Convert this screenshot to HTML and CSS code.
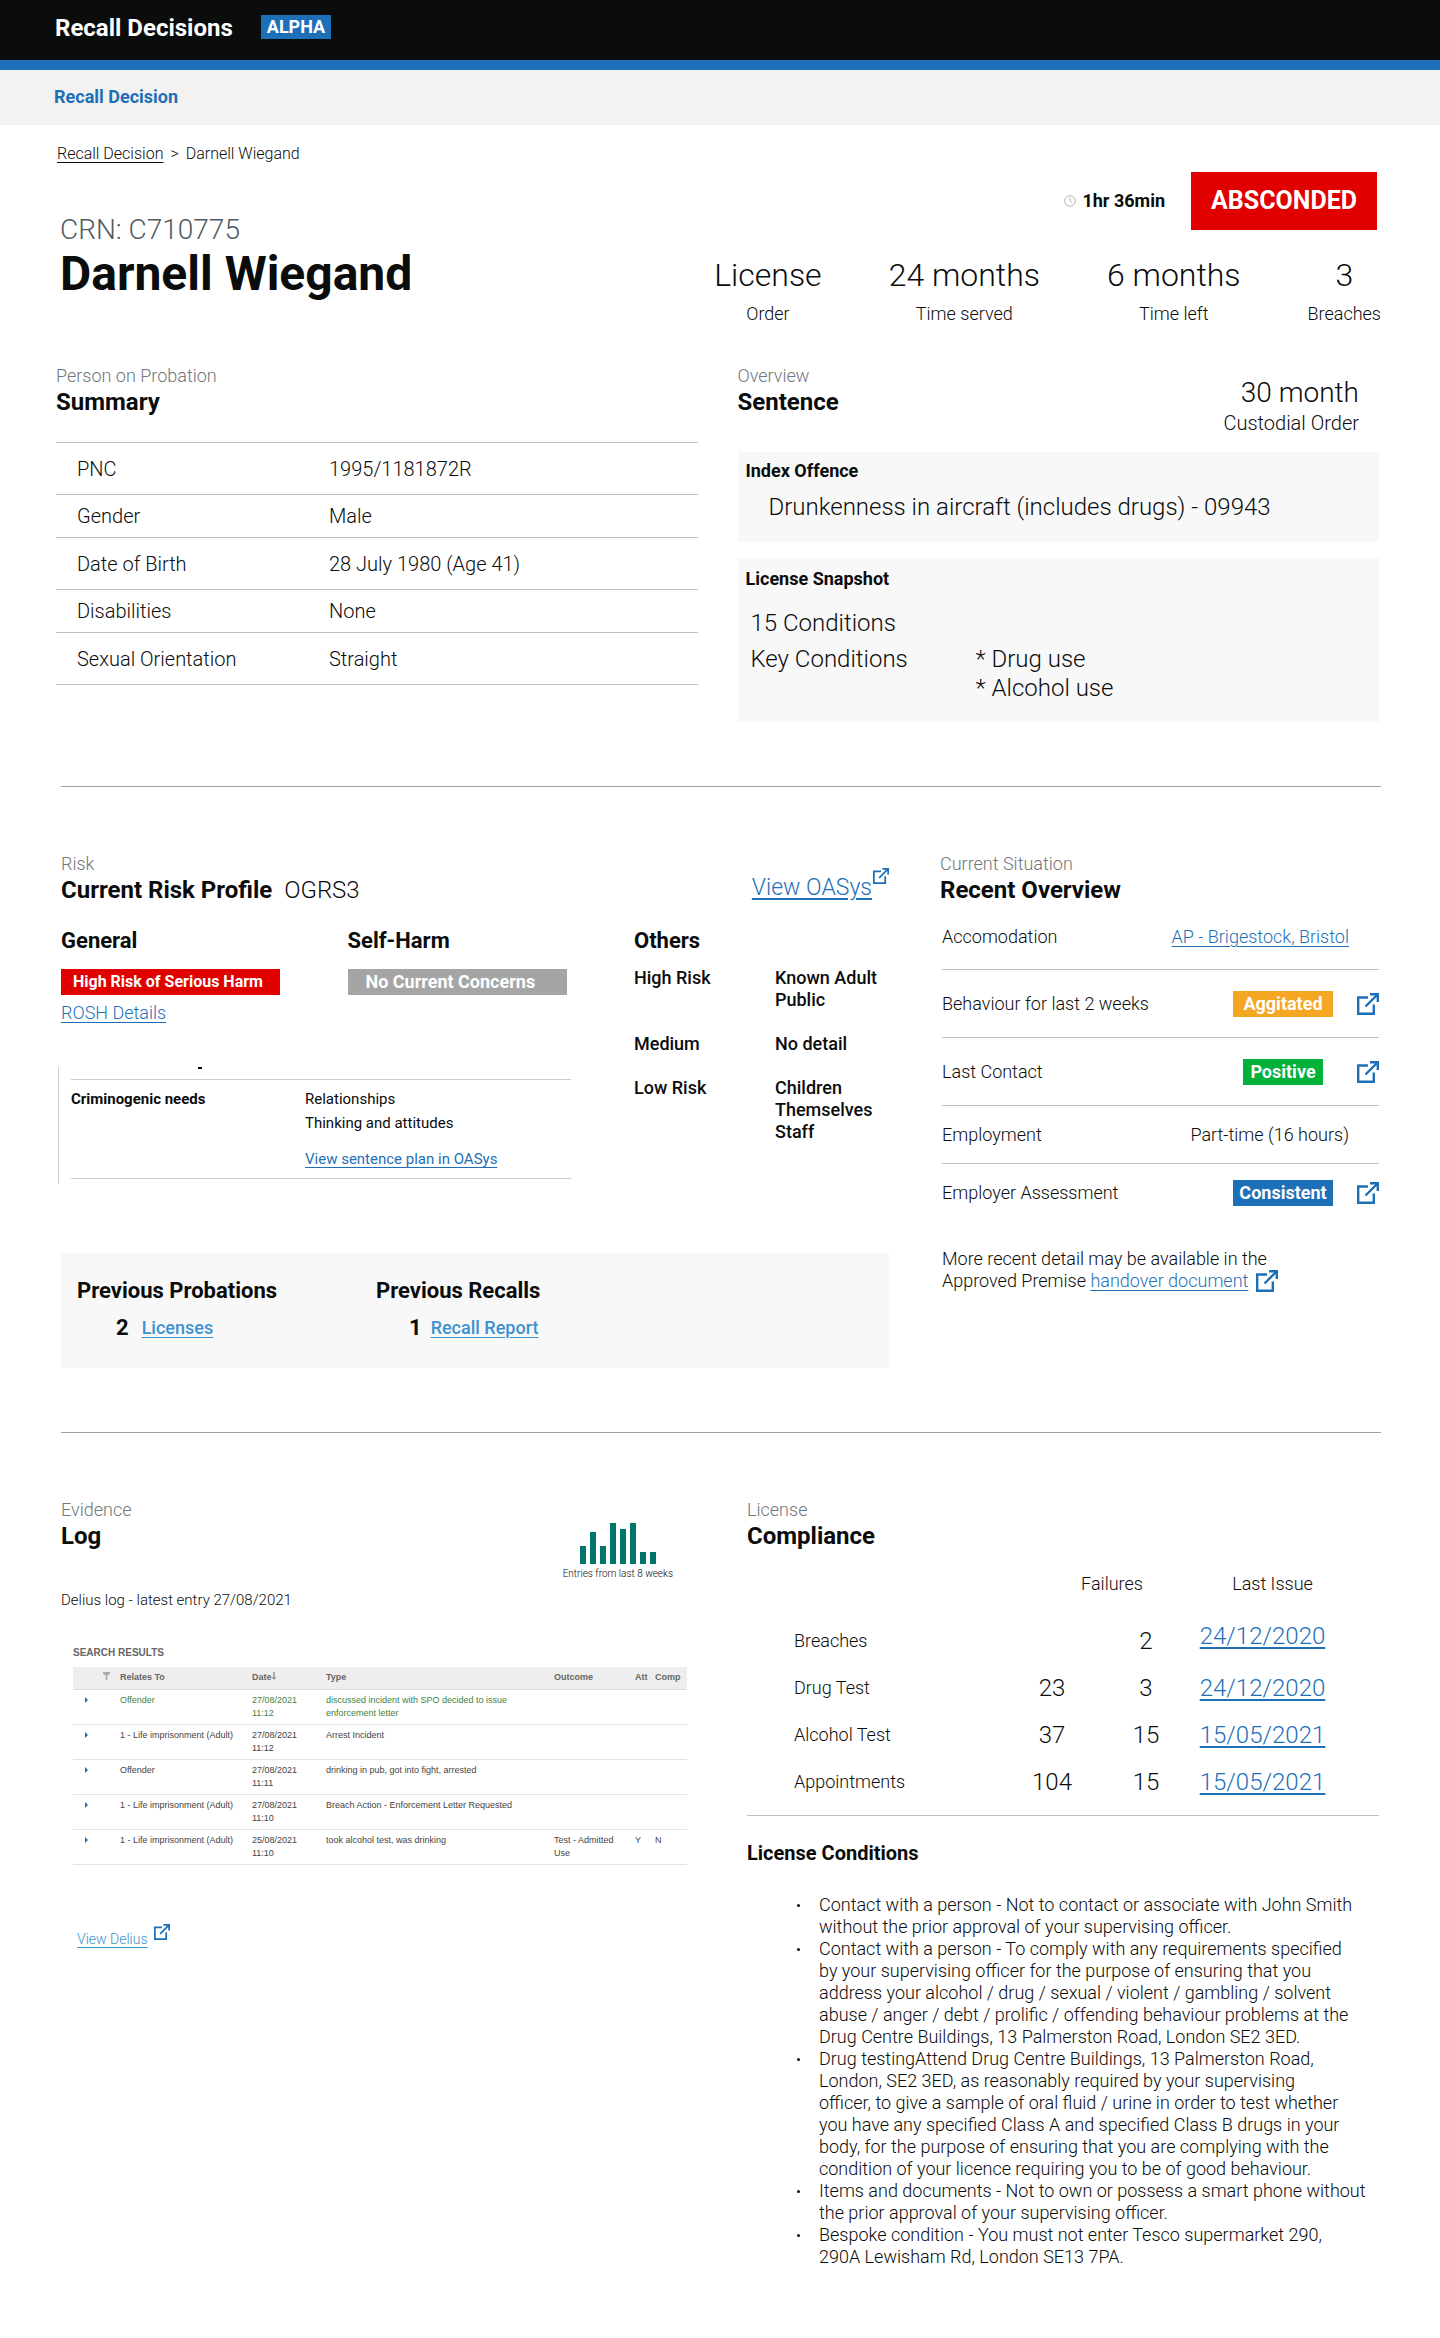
FILE: index.html
```html
<!DOCTYPE html>
<html lang="en">
<head>
<meta charset="utf-8">
<meta name="viewport" content="width=device-width, initial-scale=1">
<title>Recall Decisions</title>
<link rel="stylesheet" href="styles.css">
</head>
<body>
<svg class="sprite" aria-hidden="true">
  <symbol id="external" viewBox="0 0 22 22">
    <path d="M11 4.5H1.2V20.8H16.8V11.5M8.5 13.5L20 2M13 1.2H20.8V9" fill="none" stroke="#1d70b8" stroke-width="2.4"/>
  </symbol>
</svg>

<header class="topbar">
  <span class="topbar-title">Recall Decisions</span>
  <strong class="phase">ALPHA</strong>
</header>
<nav class="subnav" aria-label="Primary"><a href="#">Recall Decision</a></nav>
<nav class="breadcrumb" aria-label="Breadcrumb"><a href="#">Recall Decision</a><span>&gt;</span><span>Darnell Wiegand</span></nav>

<main>
  <section class="hero">
    <div class="person">
      <p class="crn">CRN: C710775</p>
      <h1>Darnell Wiegand</h1>
    </div>
    <div class="status">
      <div class="status-row">
        <p class="timer">
          <svg width="12" height="12" viewBox="0 0 12 12" aria-hidden="true"><circle cx="6" cy="6" r="5.3" fill="none" stroke="#b1b4b6"/><path d="M6 2.5V6L8.5 7.5" fill="none" stroke="#b1b4b6"/></svg>
          1hr 36min
        </p>
        <strong class="absconded">ABSCONDED</strong>
      </div>
      <ul class="stats">
        <li><b>License</b>Order</li>
        <li><b>24 months</b>Time served</li>
        <li><b>6 months</b>Time left</li>
        <li><b>3</b>Breaches</li>
      </ul>
    </div>
  </section>

  <div class="overview">
    <section>
      <p class="eyebrow">Person on Probation</p>
      <h2>Summary</h2>
      <table class="summary">
        <tr class="tall"><th scope="row">PNC</th><td>1995/1181872R</td></tr>
        <tr><th scope="row">Gender</th><td>Male</td></tr>
        <tr class="tall"><th scope="row">Date of Birth</th><td>28 July 1980 (Age 41)</td></tr>
        <tr><th scope="row">Disabilities</th><td>None</td></tr>
        <tr class="tall"><th scope="row">Sexual Orientation</th><td>Straight</td></tr>
      </table>
    </section>
    <section>
      <div class="section-head sentence-head">
        <div>
          <p class="eyebrow">Overview</p>
          <h2>Sentence</h2>
        </div>
        <p class="order"><b>30 month</b>Custodial Order</p>
      </div>
      <div class="panel offence">
        <h3>Index Offence</h3>
        <p>Drunkenness in aircraft (includes drugs) - 09943</p>
      </div>
      <div class="panel snapshot">
        <h3>License Snapshot</h3>
        <p>15 Conditions</p>
        <div class="key">
          <p>Key Conditions</p>
          <ul><li>* Drug use</li><li>* Alcohol use</li></ul>
        </div>
      </div>
    </section>
  </div>

  <hr>

  <div class="risk-row">
    <section>
      <div class="section-head">
        <div>
          <p class="eyebrow">Risk</p>
          <h2>Current Risk Profile <span class="score">OGRS3</span></h2>
        </div>
        <p class="oasys"><a href="#">View OASys</a><svg class="icon-small"><use href="#external"/></svg></p>
      </div>
      <div class="risk">
        <div class="risk-main">
          <div class="risk-levels">
            <div>
              <h3>General</h3>
              <strong class="level level-high">High Risk of Serious Harm</strong>
              <a class="rosh" href="#">ROSH Details</a>
            </div>
            <div>
              <h3>Self-Harm</h3>
              <strong class="level level-none">No Current Concerns</strong>
            </div>
          </div>
          <div class="needs">
            <span class="needs-mark"></span>
            <div class="needs-row">
              <h4>Criminogenic needs</h4>
              <div>
                <p>Relationships</p>
                <p>Thinking and attitudes</p>
                <a href="#">View sentence plan in OASys</a>
              </div>
            </div>
          </div>
        </div>
        <div>
          <h3>Others</h3>
          <dl class="others">
            <dt>High Risk</dt><dd>Known Adult<br>Public</dd>
            <dt>Medium</dt><dd>No detail</dd>
            <dt>Low Risk</dt><dd>Children<br>Themselves<br>Staff</dd>
          </dl>
        </div>
      </div>
      <div class="panel previous">
        <div>
          <h3>Previous Probations</h3>
          <p class="count count-probations"><b>2</b><a href="#">Licenses</a></p>
        </div>
        <div>
          <h3>Previous Recalls</h3>
          <p class="count count-recalls"><b>1</b><a href="#">Recall Report</a></p>
        </div>
      </div>
    </section>

    <section>
      <p class="eyebrow">Current Situation</p>
      <h2>Recent Overview</h2>
      <ul class="recent">
        <li><span>Accomodation</span><a class="value" href="#">AP - Brigestock, Bristol</a></li>
        <li class="roomy"><span>Behaviour for last 2 weeks</span><strong class="tag tag-warn">Aggitated</strong><a href="#" aria-label="Open behaviour"><svg class="icon"><use href="#external"/></svg></a></li>
        <li class="roomy"><span>Last Contact</span><strong class="tag tag-good">Positive</strong><a href="#" aria-label="Open last contact"><svg class="icon"><use href="#external"/></svg></a></li>
        <li class="snug"><span>Employment</span><span class="value">Part-time (16 hours)</span></li>
        <li class="snug"><span>Employer Assessment</span><strong class="tag tag-info">Consistent</strong><a href="#" aria-label="Open employer assessment"><svg class="icon"><use href="#external"/></svg></a></li>
      </ul>
      <div class="more">
        <p>More recent detail may be available in the</p>
        <p class="more-link"><span>Approved Premise <a href="#">handover document</a></span><svg class="icon"><use href="#external"/></svg></p>
      </div>
    </section>
  </div>

  <hr>

  <div class="evidence-row">
    <section>
      <div class="section-head">
        <div>
          <p class="eyebrow">Evidence</p>
          <h2>Log</h2>
        </div>
        <figure class="chart">
          <div class="bars">
            <i style="height:18px"></i><i style="height:32px"></i><i style="height:18px"></i><i style="height:41px"></i><i style="height:35px"></i><i style="height:41px"></i><i style="height:12px"></i><i style="height:12px"></i>
          </div>
          <figcaption>Entries from last 8 weeks</figcaption>
        </figure>
      </div>
      <p class="latest">Delius log - latest entry 27/08/2021</p>
      <div class="results">
        <h3>SEARCH RESULTS</h3>
        <table>
          <colgroup><col class="c-toggle"><col class="c-relates"><col class="c-date"><col><col class="c-outcome"><col class="c-att"><col class="c-comp"></colgroup>
          <thead>
            <tr>
              <th class="filter"><svg width="7" height="8" viewBox="0 0 7 8" aria-hidden="true"><path d="M0 0H7V1.5L4.3 3.5V8H2.7V3.5L0 1.5Z" fill="#aaa"/></svg></th>
              <th scope="col">Relates To</th><th scope="col">Date<svg width="4" height="8" viewBox="0 0 4 8" aria-hidden="true"><path d="M2 0V7M0.5 5.5L2 7.2L3.5 5.5" fill="none" stroke="#666"/></svg></th><th scope="col">Type</th><th scope="col">Outcome</th><th scope="col">Att</th><th scope="col">Comp</th>
            </tr>
          </thead>
          <tbody>
            <tr class="highlight"><td><span class="caret"></span></td><td>Offender</td><td>27/08/2021 11:12</td><td>discussed incident with SPO decided to issue<br>enforcement letter</td><td></td><td></td><td></td></tr>
            <tr><td><span class="caret"></span></td><td>1 - Life imprisonment (Adult)</td><td>27/08/2021 11:12</td><td>Arrest Incident</td><td></td><td></td><td></td></tr>
            <tr><td><span class="caret"></span></td><td>Offender</td><td>27/08/2021 11:11</td><td>drinking in pub, got into fight, arrested</td><td></td><td></td><td></td></tr>
            <tr><td><span class="caret"></span></td><td>1 - Life imprisonment (Adult)</td><td>27/08/2021 11:10</td><td>Breach Action - Enforcement Letter Requested</td><td></td><td></td><td></td></tr>
            <tr><td><span class="caret"></span></td><td>1 - Life imprisonment (Adult)</td><td>25/08/2021 11:10</td><td>took alcohol test, was drinking</td><td>Test - Admitted<br>Use</td><td>Y</td><td>N</td></tr>
          </tbody>
        </table>
      </div>
      <p class="delius"><a href="#">View Delius</a><svg class="icon-small"><use href="#external"/></svg></p>
    </section>

    <section>
      <p class="eyebrow">License</p>
      <h2>Compliance</h2>
      <table class="compliance">
        <colgroup><col><col class="c-total"><col class="c-fail"><col class="c-issue"><col class="c-rest"></colgroup>
        <thead><tr><td></td><th class="failures" scope="colgroup" colspan="2">Failures</th><th class="issue" scope="col">Last Issue</th><td></td></tr></thead>
        <tbody>
          <tr class="latest-breach"><th scope="row">Breaches</th><td></td><td>2</td><td><a href="#">24/12/2020</a></td><td></td></tr>
          <tr><th scope="row">Drug Test</th><td>23</td><td>3</td><td><a href="#">24/12/2020</a></td><td></td></tr>
          <tr><th scope="row">Alcohol Test</th><td>37</td><td>15</td><td><a href="#">15/05/2021</a></td><td></td></tr>
          <tr><th scope="row">Appointments</th><td>104</td><td>15</td><td><a href="#">15/05/2021</a></td><td></td></tr>
        </tbody>
      </table>
      <h3 class="conditions-title">License Conditions</h3>
      <ul class="conditions">
        <li><p>Contact with a person - Not to contact or associate with John Smith<br>without the prior approval of your supervising officer.</p></li>
        <li><p>Contact with a person - To comply with any requirements specified<br>by your supervising officer for the purpose of ensuring that you<br>address your alcohol / drug / sexual / violent / gambling / solvent<br>abuse / anger / debt / prolific / offending behaviour problems at the<br>Drug Centre Buildings, 13 Palmerston Road, London SE2 3ED.</p></li>
        <li><p>Drug testingAttend Drug Centre Buildings, 13 Palmerston Road,<br>London, SE2 3ED, as reasonably required by your supervising<br>officer, to give a sample of oral fluid / urine in order to test whether<br>you have any specified Class A and specified Class B drugs in your<br>body, for the purpose of ensuring that you are complying with the<br>condition of your licence requiring you to be of good behaviour.</p></li>
        <li><p>Items and documents - Not to own or possess a smart phone without<br>the prior approval of your supervising officer.</p></li>
        <li><p>Bespoke condition - You must not enter Tesco supermarket 290,<br>290A Lewisham Rd, London SE13 7PA.</p></li>
      </ul>
    </section>
  </div>
</main>
</body>
</html>
```
FILE: styles.css
```css
* { box-sizing: border-box; }

body {
  margin: 0;
  background: #fff;
  color: #0b0c0c;
  font: 350 18px/22px Roboto, "Liberation Sans", sans-serif;
}

h1, h2, h3, h4, p, ul, dl, dd, figure { margin: 0; padding: 0; }
ul { list-style: none; }
b, i { font-weight: inherit; font-style: inherit; }
a { color: #1d70b8; text-underline-offset: 3px; }
th { font-weight: inherit; text-align: left; }
table { border-collapse: collapse; width: 100%; }
td, th { padding: 0; }

h1 { font-size: 48px; line-height: 56px; font-weight: 700; }
h2 { font-size: 24px; line-height: 30px; font-weight: 700; }
h3 { font-size: 22px; line-height: 26px; font-weight: 700; }

hr { margin: 64px 59px 66px 61px; border: 0; border-top: 1px solid #a0a3a3; }

.sprite { display: none; }
.icon { width: 22px; height: 22px; display: block; }
.icon-small { width: 16px; height: 16px; }
.eyebrow { color: #6f777b; font-weight: 300; }
.panel { background: #f8f8f8; }
.section-head { display: flex; justify-content: space-between; }

/* Header */
.topbar {
  display: flex;
  align-items: flex-start;
  gap: 28px;
  height: 70px;
  padding: 15px 55px 0;
  background: #0b0c0c;
  border-bottom: 10px solid #1d70b8;
  color: #fff;
}
.topbar-title { font-size: 24px; line-height: 26px; font-weight: 700; }
.phase { padding: 0 6px; background: #1d70b8; font-size: 18px; line-height: 24px; font-weight: 700; }
.subnav { padding: 16px 54px 17px; background: #f3f2f1; }
.subnav a { font-weight: 700; text-decoration: none; }
.breadcrumb { display: flex; padding: 19px 57px 8px; gap: 7px; font-size: 16px; line-height: 20px; }
.breadcrumb a { color: #0b0c0c; }

/* Hero */
.hero { display: flex; justify-content: space-between; padding: 0 59px 40px 60px; }
.person { padding-top: 41px; }
.crn { font-size: 28px; line-height: 33px; color: #505a5f; font-weight: 300; }
.status-row { display: flex; justify-content: flex-end; align-items: center; gap: 26px; padding-right: 4px; }
.timer { display: flex; align-items: center; gap: 6px; font-weight: 700; }
.absconded { width: 186px; background: #e10000; color: #fff; font-size: 25px; line-height: 58px; font-weight: 700; text-align: center; }
.stats { display: flex; gap: 67px; padding-top: 27px; text-align: center; }
.stats b { display: block; margin-bottom: 10px; font-size: 32px; line-height: 36px; font-weight: 300; }

/* Person and sentence */
.overview { display: grid; grid-template-columns: 1fr 1fr; gap: 40px; padding: 0 61px 0 56px; }
.summary { margin-top: 25px; border-top: 1px solid #bfc1c3; font-size: 20px; }
.summary tr { height: 43px; border-bottom: 1px solid #bfc1c3; }
.summary .tall { height: 52px; }
.summary th { width: 273px; padding-left: 21px; }
.sentence-head { padding-bottom: 17px; }
.order { padding: 10px 20px 0 0; text-align: right; font-size: 20px; line-height: 24px; }
.order b { display: block; font-size: 28px; line-height: 36px; }
.overview h3 { font-size: 18px; line-height: 22px; }
.offence { padding: 8px 8px 21px; font-size: 24px; line-height: 28px; }
.offence p { padding: 11px 0 0 23px; }
.snapshot { margin-top: 16px; padding: 10px 8px 19px; font-size: 24px; line-height: 29px; }
.snapshot > p { padding: 19px 0 7px 5px; }
.key { display: grid; grid-template-columns: 225px 1fr; padding-left: 5px; }

/* Risk */
.risk-row { display: grid; grid-template-columns: 828fr 439fr; gap: 51px; padding: 0 61px; }
.score { margin-left: 6px; font-weight: 300; }
.oasys { display: flex; gap: 1px; padding-top: 15px; font-size: 23px; line-height: 26px; font-weight: 300; }
.oasys a { padding-top: 7px; text-decoration-thickness: 2px; }
.risk { display: grid; grid-template-columns: 573fr 255fr; padding-top: 23px; }
.risk-levels { display: grid; grid-template-columns: 1fr 1fr; }
.level { display: block; width: 219px; margin: 15px 0 7px; color: #fff; line-height: 26px; font-weight: 700; }
.level-high { padding-left: 12px; background: #e10000; font-size: 16px; }
.level-none { padding-left: 18px; background: #a5a5a5; }
.rosh { font-weight: 300; }
.needs { margin: 43px 63px 0 -3px; padding: 0 0 5px 12px; border-left: 1px solid #ccc; font-size: 15px; line-height: 24px; font-weight: 400; }
.needs-mark { display: block; width: 4px; height: 2px; margin: 0 0 10px 127px; background: #0b0c0c; }
.needs-row { display: grid; grid-template-columns: 234px 1fr; padding: 7px 0; border: solid #ccc; border-width: 1px 0; }
.needs h4 { font-size: 15px; font-weight: 700; }
.needs a { display: inline-block; margin-top: 12px; }
.others { display: grid; grid-template-columns: 141px 1fr; row-gap: 22px; padding-top: 13px; font-weight: 500; }
.previous { display: grid; grid-template-columns: 299px 1fr; margin-top: 69px; padding: 25px 16px 27px; }
.count { display: flex; gap: 13px; padding-top: 11px; line-height: 26px; font-weight: 500; }
.count b { font-size: 22px; font-weight: 700; }
.count a, .delius a { color: #3b92d0; }
.count-probations { padding-left: 39px; }
.count-recalls { padding-left: 33px; gap: 9px; }

/* Recent overview */
.recent { padding-left: 2px; }
.recent li { display: flex; align-items: center; height: 65px; border-bottom: 1px solid #bfc1c3; }
.recent .roomy { height: 68px; }
.recent .snug { height: 58px; }
.recent li:last-child { border-bottom: 0; }
.recent li > :first-child { flex: 1; }
.value { margin-right: 30px; }
.tag { width: 100px; margin-right: 24px; color: #fff; line-height: 26px; font-weight: 700; text-align: center; }
.tag-warn { background: #f5a623; }
.tag-good { width: 80px; margin-right: 34px; background: #00b13a; }
.tag-info { background: #1d70b8; }
.more { padding: 26px 0 0 2px; }
.more-link { display: flex; gap: 8px; }

/* Evidence log */
.evidence-row { display: grid; grid-template-columns: 626fr 632fr; gap: 60px; padding: 0 61px 70px; }
.chart { padding: 24px 14px 0 0; }
.bars { display: flex; align-items: flex-end; justify-content: center; gap: 4px; height: 41px; margin-bottom: 3px; }
.bars i { width: 6px; background: #00756b; }
.chart figcaption { font-size: 10px; line-height: 14px; }
.latest { padding-top: 9px; font-size: 15px; line-height: 20px; }
.results { padding: 36px 0 0 12px; color: #444; font: 400 9px/13px "Liberation Sans", sans-serif; }
.results h3 { margin-bottom: 7px; color: #666; font-size: 10px; line-height: 14px; }
.results table { table-layout: fixed; }
.results thead tr { height: 22px; background: #eee; border-bottom: 1px solid #ddd; color: #666; }
.results thead th { font-weight: 700; }
.results .filter { padding-left: 30px; }
.results tbody tr { height: 35px; border-bottom: 1px solid #e4e4e4; vertical-align: top; }
.results tbody td { padding-top: 4px; }
.results .highlight { color: #43843f; }
.caret { display: block; margin: 3px 0 0 12px; width: 0; border: solid transparent; border-width: 3px 0 3px 3px; border-left-color: #1d70b8; }
.c-toggle { width: 47px; }
.c-relates { width: 132px; }
.c-date { width: 74px; }
.c-outcome { width: 81px; }
.c-att { width: 20px; }
.c-comp { width: 32px; }
.results td:nth-child(3) { padding-right: 20px; }
.delius { display: flex; gap: 6px; padding: 59px 0 0 16px; font-size: 14px; line-height: 20px; font-weight: 300; }
.delius a { padding-top: 5px; }

/* Compliance */
.compliance { table-layout: fixed; text-align: center; }
.compliance thead tr { height: 66px; }
.compliance thead th { text-align: center; }
.compliance tbody tr { height: 47px; font-size: 24px; }
.compliance tbody th { padding-left: 47px; font-size: 18px; }
.compliance a { font-weight: 300; text-decoration-thickness: 2px; }
.compliance .latest-breach td:nth-child(4) { padding-bottom: 10px; }
.c-total { width: 84px; }
.c-fail { width: 104px; }
.c-issue { width: 129px; }
.c-rest { width: 52px; }
.compliance .failures { padding-left: 16px; }
.compliance .issue { padding-left: 20px; }
.conditions-title { margin-top: 10px; padding-top: 25px; border-top: 1px solid #bfc1c3; font-size: 20px; line-height: 24px; }
.conditions { padding: 29px 0 0 50px; }
.conditions li { display: grid; grid-template-columns: 22px 1fr; }
.conditions li::before { content: ""; width: 3px; height: 3px; margin-top: 10px; border-radius: 50%; background: #0b0c0c; }
```
